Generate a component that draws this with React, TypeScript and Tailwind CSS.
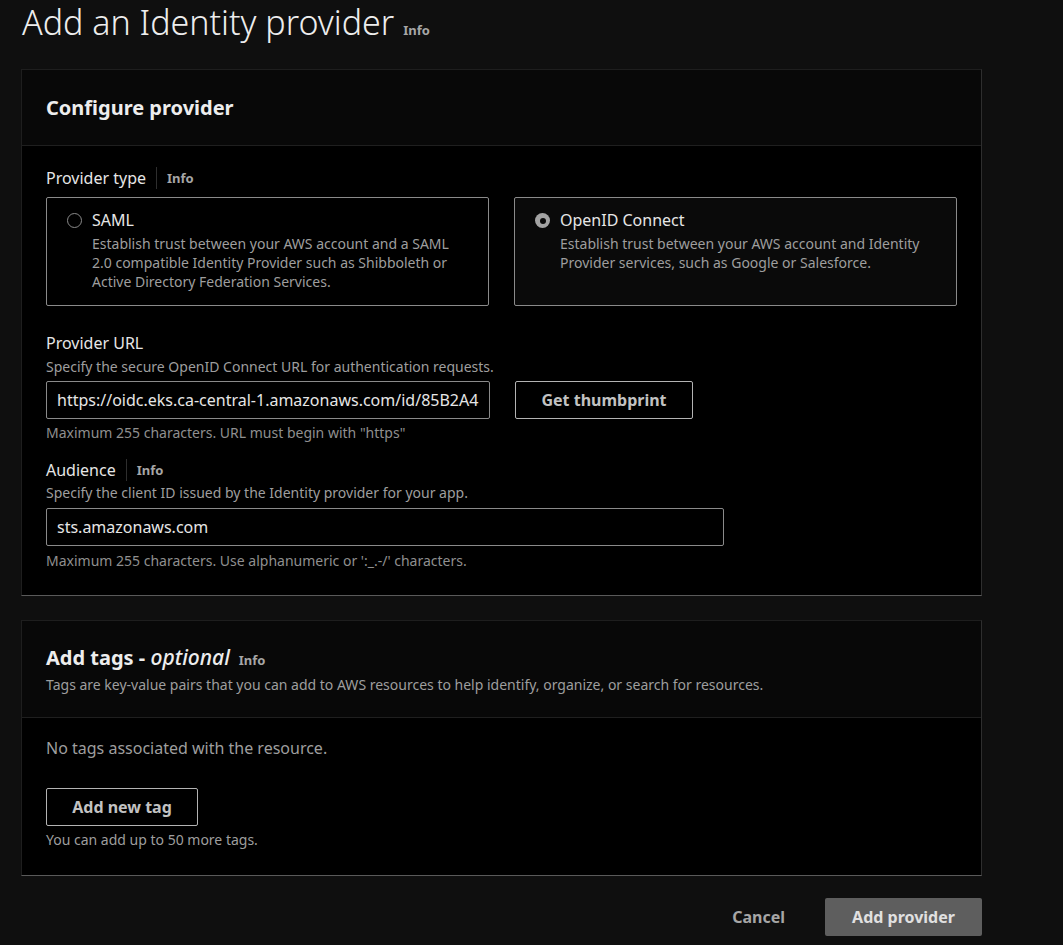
import React from 'react';

const font = { fontFamily: '"Noto Sans", "Open Sans", sans-serif' };

const Info: React.FC<{ divider?: boolean }> = ({ divider }) => (
  <span className={`text-[13px] font-bold text-[#a6a6a6] ${divider ? 'ml-[10px] pl-[10px] border-l border-[#2e2e2e]' : 'ml-2'}`}>
    Info
  </span>
);

const RadioCard: React.FC<{ title: string; desc: string; selected?: boolean }> = ({ title, desc, selected }) => (
  <div
    className={`flex gap-[10px] rounded-[2px] border border-[#8a8a8a] pl-[20px] pr-[16px] pt-[11px] pb-[14px] ${
      selected ? 'bg-[#0a0a0a]' : 'bg-black'
    }`}
  >
    <div className="pt-[4px]">
      {selected ? (
        <div className="w-[15px] h-[15px] rounded-full bg-[#a3a3a3] flex items-center justify-center">
          <div className="w-[6px] h-[6px] rounded-full bg-[#0a0a0a]" />
        </div>
      ) : (
        <div className="w-[15px] h-[15px] rounded-full border-[1.5px] border-[#8a8a8a]" />
      )}
    </div>
    <div>
      <div className="text-[16px] leading-[22px] text-[#e6e6e6]">{title}</div>
      <div className="mt-[3px] text-[14px] leading-[19px] text-[#9e9e9e]">{desc}</div>
    </div>
  </div>
);

export default function App() {
  return (
    <div style={font} className="min-h-[945px] bg-[#0f0f0f] pl-[21px] pr-[81px] text-[#e6e6e6]">
      <div className="flex items-baseline">
        <h1 className="text-[34px] leading-[44px] font-light text-[#ededed] pl-[1px]">Add an Identity provider</h1>
        <span className="ml-[9px] text-[13px] font-bold text-[#a6a6a6]">Info</span>
      </div>

      {/* Configure provider */}
      <div className="mt-[25px] border border-[#1e1e1e] border-r-[#2e2e2e] border-b-[#5a5a5a] bg-black">
        <div className="bg-[#080808] border-b border-[#1f1f1f] px-[24px] h-[76px] flex items-center">
          <h2 className="text-[20px] font-bold text-[#ededed]">Configure provider</h2>
        </div>
        <div className="px-[24px] pt-[21px] pb-[24px]">
          <div className="flex items-center text-[16px] text-[#e6e6e6] leading-[22px]">
            Provider type
            <Info divider />
          </div>
          <div className="mt-[8px] grid grid-cols-2 gap-[25px]">
            <RadioCard
              title="SAML"
              desc="Establish trust between your AWS account and a SAML 2.0 compatible Identity Provider such as Shibboleth or Active Directory Federation Services."
            />
            <RadioCard
              selected
              title="OpenID Connect"
              desc="Establish trust between your AWS account and Identity Provider services, such as Google or Salesforce."
            />
          </div>

          <div className="mt-[26px] text-[16px] leading-[22px] text-[#e6e6e6]">Provider URL</div>
          <div className="mt-[3px] text-[14px] leading-[20px] text-[#9e9e9e]">Specify the secure OpenID Connect URL for authentication requests.</div>
          <div className="mt-[4px] flex gap-[25px]">
            <input
              readOnly
              value="https://oidc.eks.ca-central-1.amazonaws.com/id/85B2A4D7E1C"
              className="w-[444px] h-[38px] bg-transparent border border-[#8a8a8a] rounded-[2px] px-[10px] text-[16px] text-[#e6e6e6] outline-none"
              style={font}
            />
            <button className="w-[178px] h-[38px] border border-[#b3b3b3] rounded-[2px] text-[16px] font-bold text-[#c2c2c2]">
              Get thumbprint
            </button>
          </div>
          <div className="mt-[4px] text-[14px] leading-[20px] text-[#8f8f8f]">Maximum 255 characters. URL must begin with "https"</div>

          <div className="mt-[16px] flex items-center text-[16px] leading-[22px] text-[#e6e6e6]">
            Audience
            <Info divider />
          </div>
          <div className="mt-[2px] text-[14px] leading-[20px] text-[#9e9e9e]">Specify the client ID issued by the Identity provider for your app.</div>
          <input
            readOnly
            value="sts.amazonaws.com"
            className="mt-[5px] block w-[678px] h-[38px] bg-transparent border border-[#8a8a8a] rounded-[2px] px-[10px] text-[16px] text-[#e6e6e6] outline-none"
            style={font}
          />
          <div className="mt-[5px] text-[14px] leading-[20px] text-[#8f8f8f]">Maximum 255 characters. Use alphanumeric or ':_.-/' characters.</div>
        </div>
      </div>

      {/* Tags */}
      <div className="mt-[24px] border border-[#1e1e1e] border-r-[#2e2e2e] border-b-[#5a5a5a] bg-black">
        <div className="bg-[#080808] border-b border-[#1f1f1f] px-[24px] pt-[22px] pb-[23px]">
          <div className="flex items-baseline">
            <h2 className="text-[20px] leading-[28px] font-bold text-[#ededed]">
              Add tags - <span className="italic font-medium text-[21px]">optional</span>
            </h2>
            <span className="ml-[9px] text-[13px] font-bold text-[#a6a6a6]">Info</span>
          </div>
          <div className="mt-[4px] text-[14px] leading-[18px] text-[#9e9e9e]">
            Tags are key-value pairs that you can add to AWS resources to help identify, organize, or search for resources.
          </div>
        </div>
        <div className="px-[24px] pt-[18px] pb-[25px]">
          <div className="text-[16px] leading-[24px] text-[#9e9e9e]">No tags associated with the resource.</div>
          <button className="mt-[28px] block w-[152px] h-[38px] border border-[#b3b3b3] rounded-[2px] text-[16px] font-bold text-[#c2c2c2]">
            Add new tag
          </button>
          <div className="mt-[4px] text-[14px] leading-[20px] text-[#9e9e9e]">You can add up to 50 more tags.</div>
        </div>
      </div>

      <div className="mt-[22px] flex justify-end items-center gap-[40px]">
        <button className="text-[16px] font-bold text-[#a6a6a6]">Cancel</button>
        <button className="w-[157px] h-[38px] rounded-[2px] bg-[#5e5e5e] text-[16px] font-bold text-[#e0e0e0]">Add provider</button>
      </div>
    </div>
  );
}
